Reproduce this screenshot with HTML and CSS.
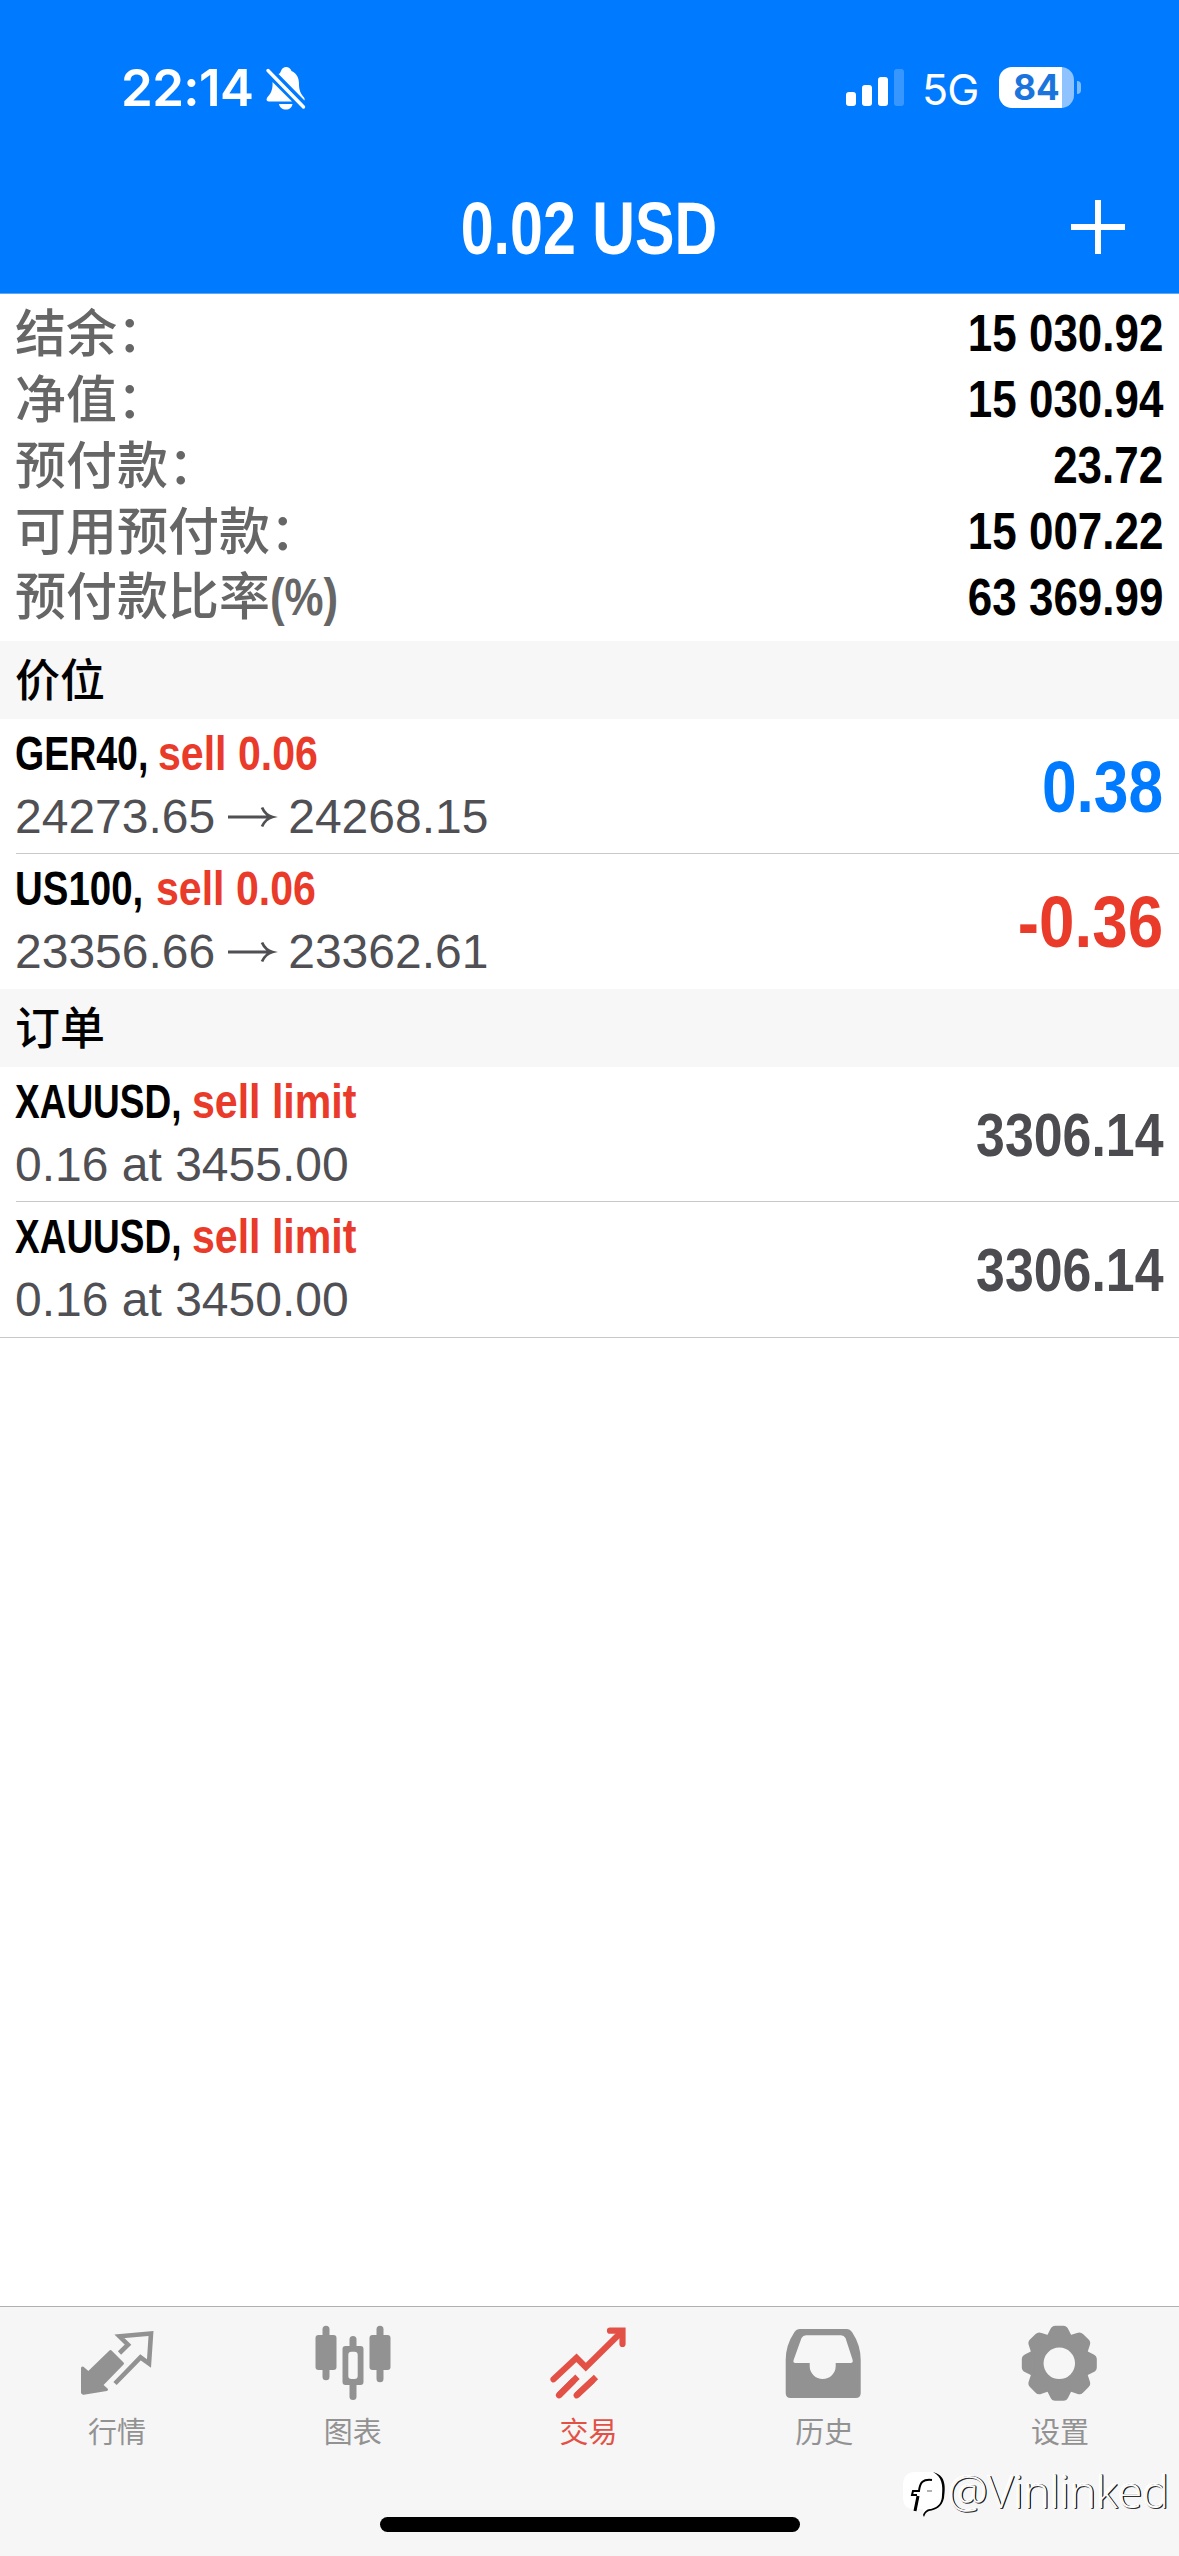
FILE: index.html
```html
<!DOCTYPE html>
<html lang="zh-CN">
<head>
<meta charset="utf-8">
<title>交易</title>
<link rel="stylesheet" href="styles.css">
</head>
<body>
<div class="screen">
  <header class="header">
    <div class="status">
      <span class="time">22:14</span>
      <svg class="bell" width="40" height="44" viewBox="0 0 40 44">
        <path fill="#fff" d="M12.500 7C14 6.500 14.500 5 15 4C16 1 18 0 20 0C22.500 0 24.500 1.500 25.500 4C31 6.500 33 11 33 17C33 23 34.500 26.500 38 30.500Q39 32 38.500 33.500Z"/>
        <path fill="#fff" d="M6.500 15C7 22 5 26.500 2 29.500C0 31.500 0 34.500 3 34.500H26ZM13 37H26.500C26 40.500 23.500 42.500 20 42.500C16.500 42.500 13.500 40.500 13 37Z"/>
        <path stroke="#fff" stroke-width="3.400" stroke-linecap="round" d="M2 3.500L37.500 40"/>
      </svg>
      <svg class="signal" width="58" height="37" viewBox="0 0 58 37" fill="#fff">
        <rect x="0" y="23" width="10" height="14" rx="3"/>
        <rect x="16" y="16" width="10" height="21" rx="3"/>
        <rect x="32" y="8" width="10" height="29" rx="3"/>
        <rect x="48" y="0" width="10" height="37" rx="3" opacity=".22"/>
      </svg>
      <span class="network">5G</span>
      <div class="battery"><span>84</span></div>
      <i class="nub"></i>
    </div>
    <div class="titlebar">
      <h1 class="title">0.02 USD</h1>
      <svg class="plus" width="54" height="54" viewBox="0 0 54 54"><path stroke="#fff" stroke-width="6" d="M0 27H54M27 0V54"/></svg>
    </div>
  </header>

  <main class="content">
    <dl class="summary">
      <div class="line"><dt>结余：</dt><dd>15 030.92</dd></div>
      <div class="line"><dt>净值：</dt><dd>15 030.94</dd></div>
      <div class="line"><dt>预付款：</dt><dd>23.72</dd></div>
      <div class="line"><dt>可用预付款：</dt><dd>15 007.22</dd></div>
      <div class="line"><dt>预付款比率<span class="pct">(%)</span></dt><dd>63 369.99</dd></div>
    </dl>

    <h2 class="section">价位</h2>
    <div class="row">
      <div class="info">
        <div class="name"><span class="sym ger">GER40,</span> <span class="sell">sell 0.06</span></div>
        <div class="detail">24273.65<svg class="arrow" width="46" height="22" viewBox="0 0 46 22"><path d="M0 11H44M34 1.500C36 6 39 9.500 44.500 11C39 12.500 36 16 34 20.500"/></svg>24268.15</div>
      </div>
      <div class="value up">0.38</div>
    </div>
    <div class="row last">
      <div class="info">
        <div class="name"><span class="sym us">US100,</span> <span class="sell">sell 0.06</span></div>
        <div class="detail">23356.66<svg class="arrow" width="46" height="22" viewBox="0 0 46 22"><path d="M0 11H44M34 1.500C36 6 39 9.500 44.500 11C39 12.500 36 16 34 20.500"/></svg>23362.61</div>
      </div>
      <div class="value down">-0.36</div>
    </div>

    <h2 class="section">订单</h2>
    <div class="row">
      <div class="info">
        <div class="name"><span class="sym xau">XAUUSD,</span> <span class="sell">sell limit</span></div>
        <div class="detail">0.16 at 3455.00</div>
      </div>
      <div class="value price">3306.14</div>
    </div>
    <div class="row end">
      <div class="info">
        <div class="name"><span class="sym xau">XAUUSD,</span> <span class="sell">sell limit</span></div>
        <div class="detail">0.16 at 3450.00</div>
      </div>
      <div class="value price">3306.14</div>
    </div>
  </main>

  <nav class="tabs">
    <div class="tab">
      <svg width="76" height="78" viewBox="0 0 76 78">
        <path fill="#929292" stroke="#929292" stroke-width="3" stroke-linejoin="round" d="M2.500 44L8.300 49L30.500 27.500L42.500 39.500L21.500 61L26.500 65.500L3.500 69.300L2.500 68.500Z"/>
        <path fill="none" stroke="#929292" stroke-width="4.600" d="M39.500 29L48 20.700L39.500 12.300L71 9.500L69 39.500L60.500 33.300L35 59.500"/>
      </svg>
      <span>行情</span>
    </div>
    <div class="tab">
      <svg width="76" height="78" viewBox="0 0 76 78" fill="#929292">
        <rect x="-.5" y="11" width="21" height="35" rx="3"/><rect x="6.500" y="1.700" width="7" height="54.500" rx="3.500"/>
        <rect x="53.500" y="11" width="21" height="35" rx="3"/><rect x="60.500" y="1.700" width="7" height="56.500" rx="3.500"/>
        <rect x="33.500" y="12" width="7" height="15" rx="3.500"/><rect x="33.500" y="56" width="7" height="20" rx="3.500"/>
        <path fill-rule="evenodd" d="M29.500 22H44.500Q47.500 22 47.500 25V58Q47.500 61 44.500 61H29.500Q26.500 61 26.500 58V25Q26.500 22 29.500 22ZM35.500 27.700Q32.300 27.700 32.300 31V52Q32.300 55 35.500 55H38.500Q41.700 55 41.700 52V31Q41.700 27.700 38.500 27.700Z"/>
      </svg>
      <span>图表</span>
    </div>
    <div class="tab active">
      <svg width="76" height="78" viewBox="0 0 76 78" fill="none" stroke="#e35146" stroke-width="6.200">
        <path stroke-linecap="round" d="M2.500 55.300L25.500 33.800L34.800 43.200L70.200 8.300"/>
        <path stroke-linecap="round" d="M59 6.700H71.500V20"/>
        <path stroke-linecap="round" d="M8 71.300L22 57.300M25.700 71.300L41 57"/>
        <path d="M8 71.300L26.500 52.800M25.700 71.300L45 53"/>
      </svg>
      <span>交易</span>
    </div>
    <div class="tab">
      <svg width="76" height="78" viewBox="0 0 76 78" fill="#929292">
        <path fill-rule="evenodd" d="M13 5H60Q63 5 65 8Q73.700 21 73.700 36V69Q73.700 74 68.700 74H3.700Q-1.300 74 -1.300 69V36Q-1.300 21 7.500 8Q9.500 5 13 5ZM19 11.200Q16 11.200 14.500 14L6.800 35.500Q5.500 39 8.500 39H22.700V42A13 13 0 0 0 48.700 42V39H63.500Q66.500 39 65.500 35.500L58.500 14Q57 11.200 54 11.200Z"/>
      </svg>
      <span>历史</span>
    </div>
    <div class="tab">
      <svg width="76" height="78" viewBox="-36.300 -39.300 76 78">
        <circle r="23" fill="none" stroke="#929292" stroke-width="14.500"/>
        <defs><path id="tooth" fill="#929292" d="M-13.500 -25L-9 -34Q-7.500 -37.500 -4 -37.500H4Q7.500 -37.500 9 -34L13.500 -25Z"/></defs>
        <use href="#tooth"/><use href="#tooth" transform="rotate(45)"/><use href="#tooth" transform="rotate(90)"/><use href="#tooth" transform="rotate(135)"/><use href="#tooth" transform="rotate(180)"/><use href="#tooth" transform="rotate(225)"/><use href="#tooth" transform="rotate(270)"/><use href="#tooth" transform="rotate(315)"/>
      </svg>
      <span>设置</span>
    </div>
    <div class="home"></div>
    <div class="watermark">
      <svg width="46" height="48" viewBox="0 0 46 48">
        <path fill="#fff" d="M12 1H30C38 1 42 8 42 18C42 31 37 38 24 40L21 44L20 38H10C3 38 0 33 0 26V14C0 6 4 1 12 1Z"/>
        <path fill="#000" d="M30 1C42 4 43 14 41 27C39 36 33 39 26 40C23 41 22 43 21 46L20 44C22 39 25 38 28 38C36 36 39 31 39 24C40 14 39 6 30 1Z"/>
        <path fill="none" stroke="#000" stroke-width="2" d="M29 9C20 8 17 11 16 20H10L9 24H14"/>
        <path fill="none" stroke="#000" stroke-width="3" d="M15 25L12 40"/>
        <path stroke="#666" stroke-width="1" d="M24 20H29"/>
      </svg>
      <span>@Vinlinked</span>
    </div>
  </nav>
</div>
</body>
</html>
```
FILE: styles.css
```css
* { box-sizing: border-box; }
body { margin: 0; background: #fff; }
h1, h2, dl, dd { margin: 0; }
.screen {
  width: 1179px; height: 2556px;
  display: flex; flex-direction: column;
  font-family: "Liberation Sans", "Noto Sans CJK SC", sans-serif;
  overflow: hidden;
}
svg { display: block; overflow: visible; flex: none; }

.header { height: 294px; background: #007aff; border-bottom: 1px solid #5fa8f0; color: #fff; }
.status { height: 160px; padding: 67px 98px 0 121px; display: flex; align-items: flex-start; font-family: Inter, sans-serif; }
.time { width: 145px; font-size: 51px; line-height: 42px; font-weight: 600; white-space: nowrap; letter-spacing: -.6px; }
.signal { margin: 2px 0 0 540px; }
.network { margin-left: 18px; width: 77px; font-size: 43px; line-height: 44px; white-space: nowrap; letter-spacing: -1px; }
.battery {
  width: 75px; height: 41px; border-radius: 13px;
  background: linear-gradient(90deg, #fff 63px, #8ec3ff 63px);
  color: #1a74dd; font-size: 35px; font-weight: 700; line-height: 41px; text-align: center; flex: none;
}
.nub { width: 4px; height: 13px; margin: 14px 0 0 3px; border-radius: 0 4px 4px 0; background: #7fbcff; flex: none; }

.titlebar { height: 133px; padding: 0 54px 0 107px; display: grid; grid-template-columns: 1fr 54px; align-items: center; }
.title { font-size: 74px; line-height: 133px; padding-top: 2px; font-weight: 700; text-align: center; transform: scaleX(.8); }
.plus { margin-top: -1px; }

.summary { padding: 3px 16px 9px 15px; height: 347px; }
.line { height: 66px; display: flex; justify-content: space-between; align-items: center; line-height: 66px; }
.line dt { font-family: "Noto Sans CJK SC", sans-serif; font-size: 51px; font-weight: 500; color: #666; white-space: nowrap; }
.pct { display: inline-block; font-family: "Liberation Sans", sans-serif; font-weight: 700; font-size: 51px; line-height: 60px; transform: scaleX(.86); transform-origin: left; }
.line dd { padding-top: 5px; font-size: 52px; font-weight: 700; color: #000; transform: scaleX(.845); transform-origin: right; white-space: nowrap; }

.section { height: 78px; padding-left: 15px; background: #f7f7f7; font: 500 45px/74px "Noto Sans CJK SC", sans-serif; color: #000; }
.row { height: 135px; margin-left: 16px; padding-right: 16px; display: flex; justify-content: space-between; border-bottom: 1px solid #c8c8cb; }
.row.last { border: 0; }
.row.end { height: 136px; margin-left: 0; padding-left: 16px; }
.info { padding-top: 3px; margin-left: -1px; }
.name { display: flex; font-size: 49px; line-height: 62px; height: 63px; font-weight: 700; white-space: nowrap; }
.sym, .sell { display: block; transform-origin: left; }
.ger { width: 143px; transform: scaleX(.765); }
.us { width: 141px; transform: scaleX(.785); }
.xau { width: 177px; transform: scaleX(.755); }
.sell { color: #e93a2a; transform: scaleX(.838); }
.detail { display: flex; align-items: center; font-size: 48px; line-height: 64px; height: 64px; color: #4f4f54; white-space: nowrap; }
.arrow { margin: 0 14px 0 13px; fill: none; stroke: #4f4f54; stroke-width: 2.8; }
.value { font-weight: 700; line-height: 137px; height: 134px; transform: scaleX(.865); transform-origin: right; white-space: nowrap; }
.up, .down { font-size: 72px; }
.up { color: #007aff; }
.down { color: #e93a2a; transform: scaleX(.885); }
.price { font-size: 61px; color: #4b4b50; transform: scaleX(.85); }

.tabs { position: relative; margin-top: auto; height: 250px; background: #f6f6f6; border-top: 1px solid #b0b0b0; display: flex; }
.tab { flex: 1; padding-top: 17px; display: flex; flex-direction: column; align-items: center; color: #929292; font: 400 29px/40px "Noto Sans CJK SC", sans-serif; }
.tab span { margin: 8px 2px 0 0; }
.tab.active { color: #e35146; }
.home { position: absolute; left: 380px; top: 210px; width: 420px; height: 15px; border-radius: 8px; background: #000; }
.watermark { position: absolute; left: 903px; top: 164px; display: flex; align-items: flex-start; }
.watermark span { margin: -2px 0 0 -1px; font: 300 45px/44px "Open Sans", sans-serif; color: #fbfbfb; letter-spacing: -.2px; text-shadow: 1px 0 0 #000, 1px 1px 0 #333, -1px -1px 0 #fff; white-space: nowrap; }
```
